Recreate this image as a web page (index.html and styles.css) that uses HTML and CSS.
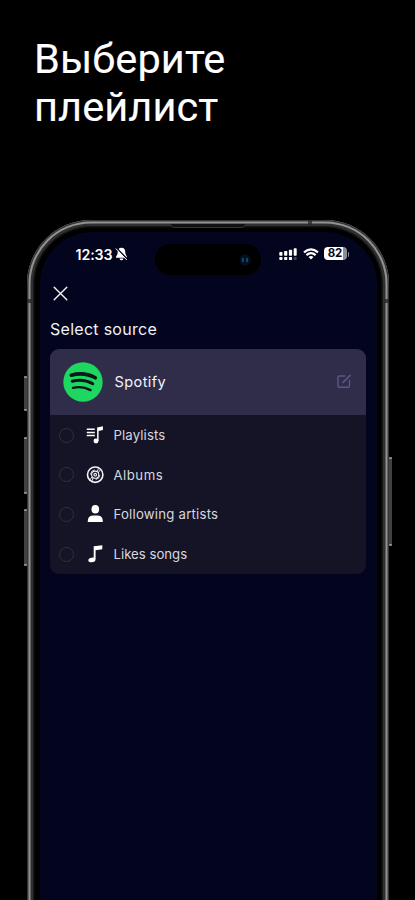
FILE: index.html
```html
<!DOCTYPE html>
<html lang="ru">
<head>
<meta charset="utf-8">
<title>Выберите плейлист</title>
<link rel="stylesheet" href="styles.css">
</head>
<body>
<h1 class="title">Выберите<br>плейлист</h1>
<main class="phone">
  <div class="frame"></div>
  <i class="key key-action"></i><i class="key key-up"></i><i class="key key-down"></i><i class="key key-power"></i>
  <i class="band band-left"></i><i class="band band-right"></i><i class="band band-top"></i>
  <i class="earpiece"></i>
  <div class="screen">
    <div class="status">
      <span class="time">12:33</span>
      <svg class="bell" width="13" height="14" viewBox="0 0 13 14"><path d="M6.500 .8C3.800.8 2.700 2.900 2.700 5.200 2.700 8 .9 8.800.9 10.800h11.200c0-2-1.800-2.800-1.800-5.600C10.300 2.900 9.200.8 6.500.8zM4.500 11.400h4q-.4 1.900-2 1.900t-2-1.900z" fill="#fff"/><path d="M1.800 1.200l10.500 11" stroke="#02051d" stroke-width="1.500"/><path d="M.8 1.500l11 11.500" stroke="#fff" stroke-width="1"/></svg>
      <svg class="signal" width="19" height="14" viewBox="0 0 19 14"><g fill="#fff"><rect x=".3" y="5" width="3.200" height="3.700" rx=".7"/><rect x="5.100" y="4" width="3.200" height="4.700" rx=".7"/><rect x="9.900" y="2.800" width="3.200" height="5.900" rx=".7"/><rect x="14.700" y="1.200" width="3" height="7.500" rx=".7"/><rect x=".3" y="10" width="3.200" height="3" rx=".8"/><rect x="5.100" y="10" width="3.200" height="3" rx=".8"/><rect x="9.900" y="10" width="3.200" height="3" rx=".8"/><rect x="14.700" y="10" width="3" height="3" rx=".8" opacity=".25"/></g></svg>
      <svg class="wifi" width="16" height="12" viewBox="0 0 16 12"><g fill="none" stroke="#fff" stroke-width="2.200"><path d="M1 4.300q7-6 14 0"/><path d="M3.400 7.100q4.600-3.900 9.200 0"/></g><path d="M5.500 9q2.500-2 5 0L8 11.600z" fill="#fff"/></svg>
      <span class="battery">82</span><i class="battery-tip"></i>
    </div>
    <svg class="close" width="15" height="15" viewBox="0 0 15 15"><path d="M1.200 1.200l12.600 12.600M13.800 1.200L1.200 13.800" stroke="#f4f4f8" stroke-width="1.400" stroke-linecap="round"/></svg>
    <h2 class="heading">Select source</h2>
    <section class="card">
      <div class="service">
        <svg class="logo" width="40" height="40" viewBox="0 0 40 40"><circle cx="20" cy="20" r="19.700" fill="#1ed760"/><g fill="none" stroke="#0b1719" stroke-linecap="round"><path d="M8.300 13.200c8-2.300 17-1.400 24 2.600" stroke-width="3.600"/><path d="M9.300 19.300c7-2 14.300-1.100 20.500 2.400" stroke-width="3"/><path d="M10 25.900c6.200-1.500 12.200-.8 17.500 2.200" stroke-width="2.400"/></g></svg>
        <span class="service-name">Spotify</span>
        <svg class="edit" width="15" height="15" viewBox="0 0 15 15"><g fill="none" stroke="#5d568c" stroke-width="1.400"><path d="M8.300 2H2.300Q1 2 1 3.300V12q0 1.300 1.300 1.300h8.900q1.300 0 1.300-1.300V6.100"/><path d="M5.600 8.900l7.900-7.900" stroke-width="1.700"/></g></svg>
      </div>
      <ul class="list">
        <li class="row"><i class="radio"></i><svg class="icon" width="18" height="20" viewBox="0 0 18 20"><path d="M.8 4.200h8M.8 7.400h8M.8 10.600h8" stroke="#fff" stroke-width="1.500"/><path d="M11.100 2.500L16.900 1.200V5l-4.300 1v10h-1.500z" fill="#fff"/><ellipse cx="10" cy="16" rx="2.500" ry="2.400" fill="#fff"/></svg><span class="label-playlists">Playlists</span></li>
        <li class="row"><i class="radio"></i><svg class="icon" width="18" height="20" viewBox="0 0 18 20"><g fill="none" stroke="#f4f4f6"><circle cx="9.200" cy="9.700" r="7.700" stroke-width="1.600"/><circle cx="9.200" cy="9.700" r="3.600" stroke-width="1.100"/><circle cx="9.200" cy="9.700" r="1.300" stroke-width="1.100"/><path d="M4.500 9.500q.4-4 4.200-4.700M13.900 9.900q-.4 4-4.200 4.700M12 8l2.700-3.700M6.400 11.400l-2.700 3.700M12.300 3.500l-1 3.300M6.100 15.900l1-3.300" stroke-width=".9"/></g></svg><span class="label-albums">Albums</span></li>
        <li class="row"><i class="radio"></i><svg class="icon" width="18" height="20" viewBox="0 0 18 20"><ellipse cx="9.300" cy="5.300" rx="3.800" ry="4.300" fill="#fff"/><path d="M1.700 18q-.2-6.300 5-6.600h5.200q5.200.3 5 6.600z" fill="#fff"/></svg><span class="label-artists">Following artists</span></li>
        <li class="row"><i class="radio"></i><svg class="icon" width="18" height="20" viewBox="0 0 18 20"><path d="M7.700 2.300L16.300 1.300v4l-6.700.9V15q0 3.300-4.100 3.300-3.200 0-3.200-2.100 0-2.400 5.400-2.700z" fill="#fff"/></svg><span>Likes songs</span></li>
      </ul>
    </section>
  </div>
  <div class="island"><svg width="14" height="14" viewBox="0 0 14 14"><circle cx="7" cy="7" r="5.500" fill="#04101c"/><path d="M5.200 5q-1.100 2 0 4M8.700 5q1.200 2 0 4" fill="none" stroke="#124d82" stroke-width="1.700"/></svg></div>
</main>
</body>
</html>
```
FILE: styles.css
```css
* { box-sizing: border-box; }
html, body { margin: 0; height: 900px; overflow: hidden; background: #000; }
body { display: flex; flex-direction: column; color: #fff; font-family: Inter, sans-serif; }
.title { flex: none; height: 220px; margin: 0; padding: 35px 0 0 34px; font: 400 41.500px/47.500px Roboto, sans-serif; letter-spacing: .1px; -webkit-text-stroke: .12px #fff; }

.phone { position: relative; flex: none; width: 362px; height: 680px; margin-left: 27px; padding: 12px 12.500px 0; }
.frame { position: absolute; inset: 0; overflow: hidden; }
.frame::before {
  content: ""; position: absolute; inset: 0 0 -12px; border-radius: 64px 64px 0 0; background: #000;
  box-shadow: inset 0 0 0 1.500px #353535, inset 0 0 0 3.500px #929292, inset 0 0 0 6px #303030, inset 0 0 0 7.500px #151515;
}
.key { position: absolute; width: 3px; background: #414141; border: solid #8c8c8c; border-width: 2px 0; border-radius: 1px; }
.key-action { left: -3px; top: 156px; height: 35px; }
.key-up { left: -3px; top: 217px; height: 57px; }
.key-down { left: -3px; top: 289px; height: 57px; }
.key-power { right: -3px; top: 237px; height: 89px; }
.band { position: absolute; background: #292929; opacity: .8; }
.band-left { left: 0; top: 79px; width: 5px; height: 4px; }
.band-right { right: 0; top: 79px; width: 5px; height: 4px; }
.band-top { left: 281px; top: 0; width: 4px; height: 5px; }
.earpiece { position: absolute; left: 144px; top: 4px; width: 74px; height: 4px; background: #111; border-bottom: 1px solid #333; border-radius: 0 0 4px 4px; }
.island { position: absolute; left: 128px; top: 24px; width: 106px; height: 31px; border-radius: 16px; background: #000; display: flex; align-items: center; justify-content: flex-end; padding-right: 9px; }

.screen { position: relative; height: 668px; padding: 14px 10.500px 0; border-radius: 52px 52px 0 0; background: #02051d; }
.status { display: flex; align-items: center; height: 16px; padding-left: 25.500px; }
.time { width: 38.500px; font-size: 14.200px; font-weight: 600; letter-spacing: -.1px; line-height: 15px; }
.bell { margin-left: 1px; }
.signal { margin-left: 151px; }
.wifi { margin-left: 4.500px; }
.battery { width: 23px; height: 13px; margin-left: 5px; margin-top: -1px; border-radius: 4px; background: linear-gradient(90deg, #fff 82%, #8b8d99 82%); color: #080a20; font-size: 11.500px; font-weight: 700; line-height: 13px; text-align: center; }
.battery-tip { width: 1.500px; height: 5px; margin-left: 1px; border-radius: 0 2px 2px 0; background: #8b8d99; }
.close { display: block; margin: 24px 0 0 2.500px; }
.heading { margin: 18px 0 0; font-size: 16px; line-height: 20px; font-weight: 400; letter-spacing: .28px; color: #f1f1f7; }
.card { width: 316px; height: 225px; margin-top: 10px; border-radius: 9px; overflow: hidden; background: #141426; }
.service { display: flex; align-items: center; height: 65.500px; padding: 0 14px 0 12.500px; background: #2f2d49; }
.service-name { flex: 1; margin-left: 12px; font-size: 14.500px; letter-spacing: .42px; color: #f3f3fa; }
.list { margin: 0; padding: .7px 0 0; list-style: none; }
.row { display: flex; align-items: center; height: 39.700px; padding-left: 9px; font-size: 13.200px; color: #d7d7df; }
.radio { width: 15px; height: 15px; border: 1px solid #303042; border-radius: 50%; }
.icon { margin: 0 9.500px 0 12px; }
.label-playlists { letter-spacing: .12px; }
.label-albums { letter-spacing: .5px; }
.label-artists { letter-spacing: .22px; }
```
